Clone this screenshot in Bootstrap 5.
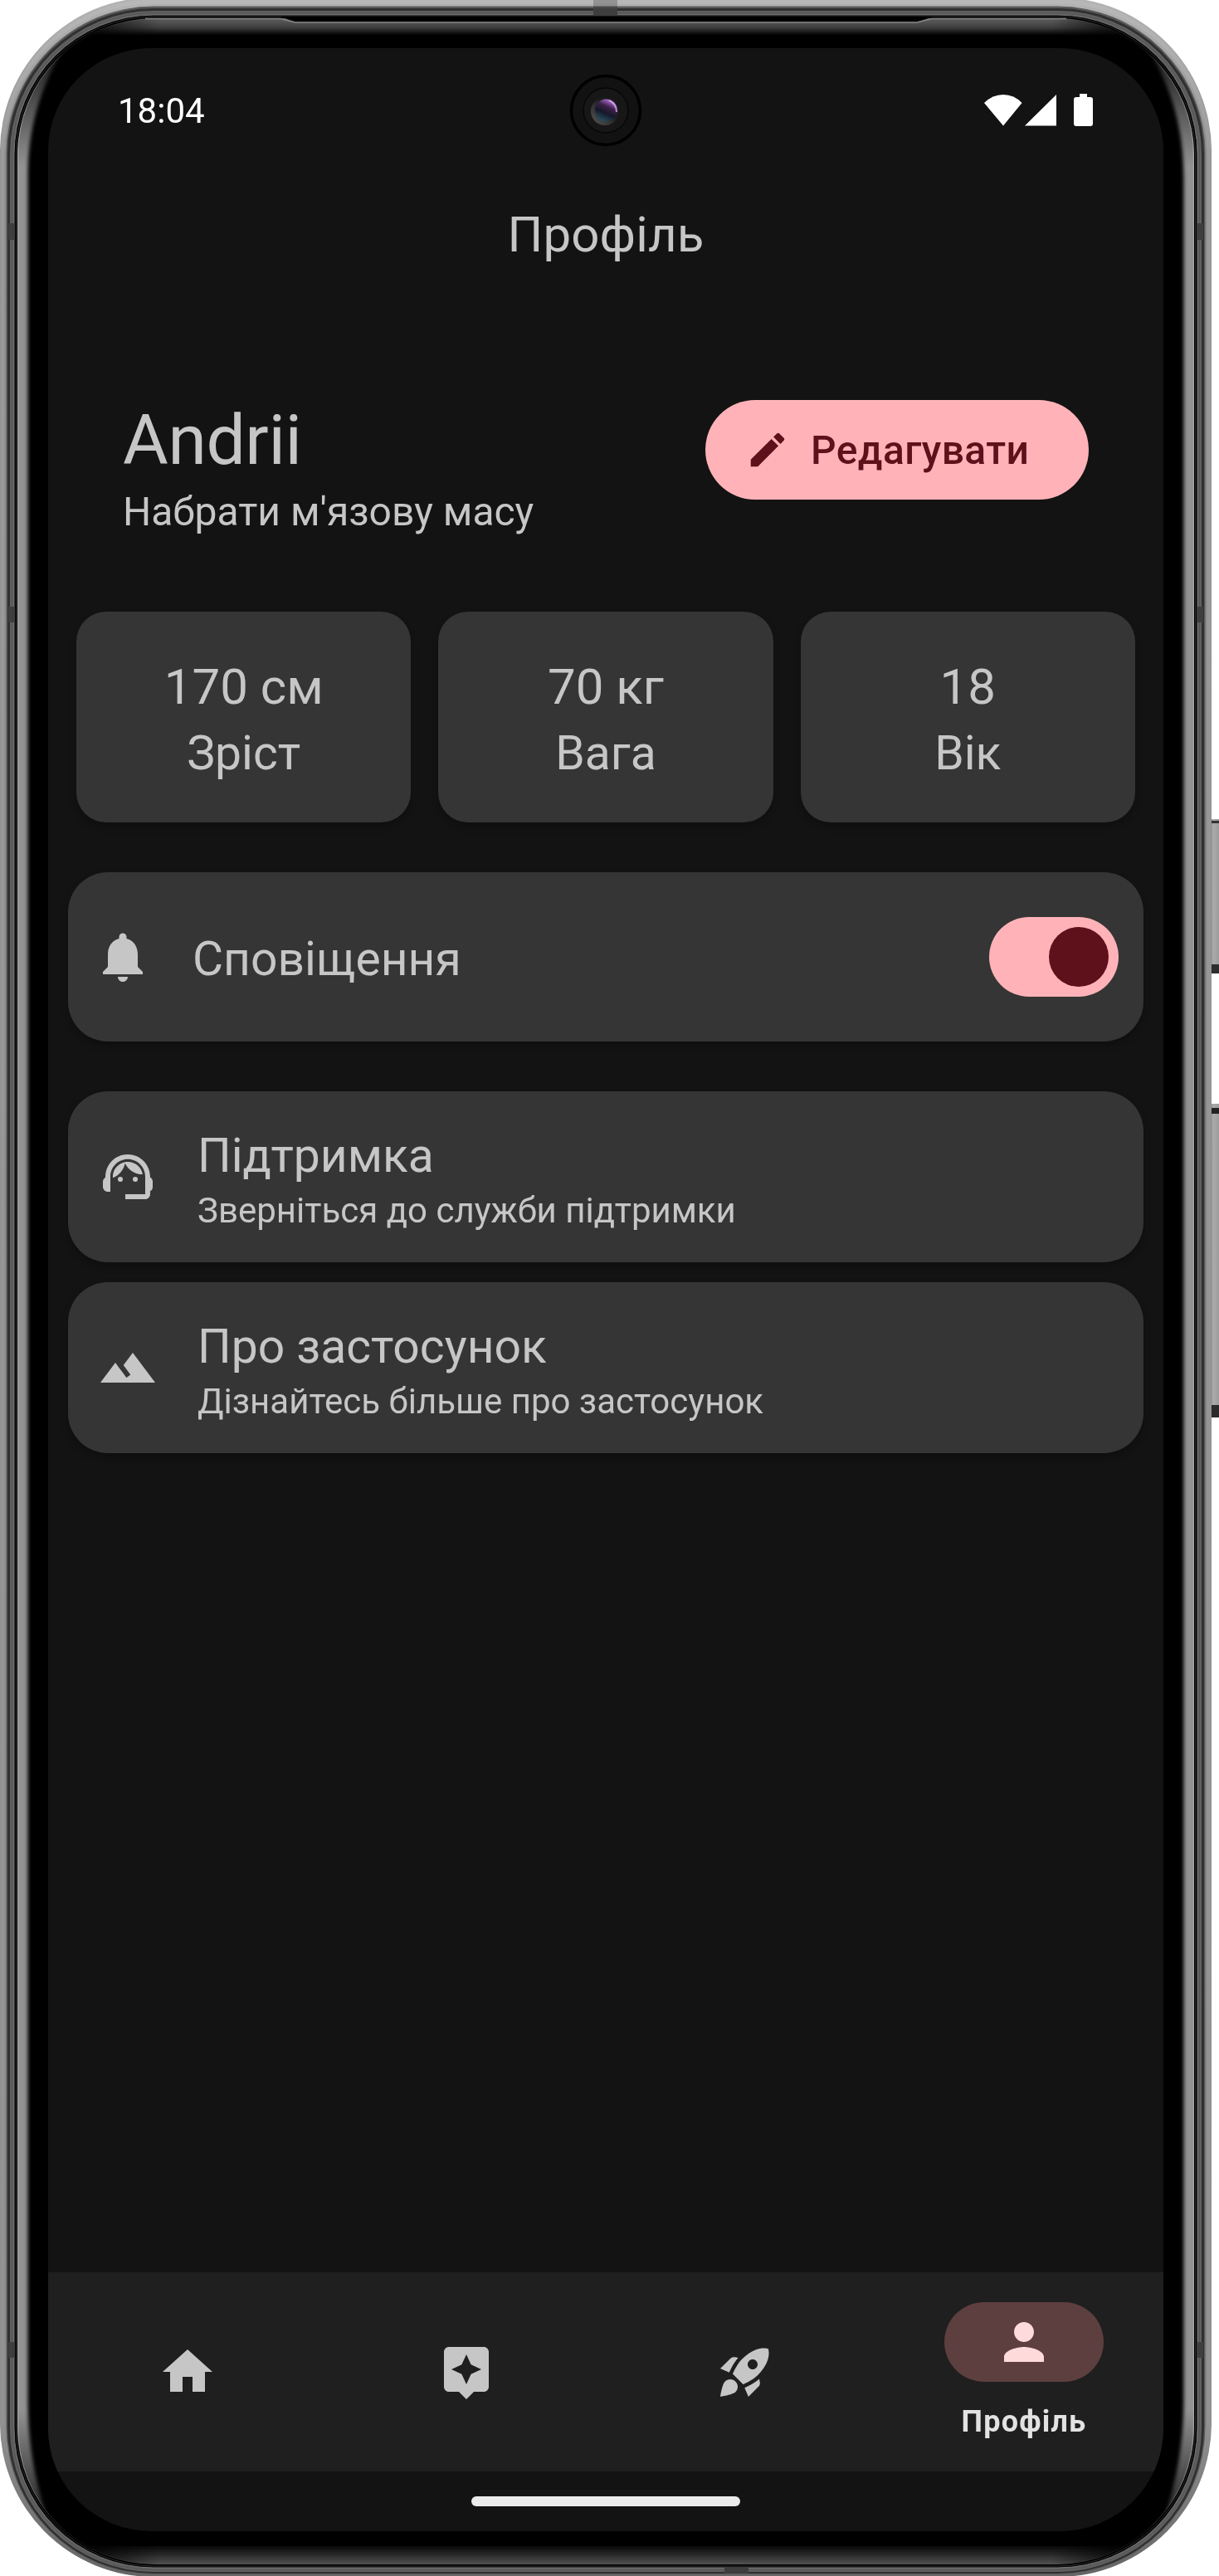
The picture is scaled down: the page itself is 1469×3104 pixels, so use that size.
<!DOCTYPE html>
<html lang="uk">
<head>
<meta charset="utf-8">
<meta name="viewport" content="width=device-width, initial-scale=1">
<title>Профіль</title>
<link rel="stylesheet" href="https://cdn.jsdelivr.net/npm/bootstrap@5.3.0/dist/css/bootstrap.min.css">
<style>
  body { background: #fff; font-family: Roboto, "Noto Sans", sans-serif; color: #c6c6c6; }
  .phone { width: 1469px; height: 3104px; padding: 58px 67px 54px 58px; }
  .phone-frame { top: 0; left: 0; }
  .app-screen { background: #131313; border-radius: 124px; height: 2992px; }
  .status-bar { height: 150px; padding: 0 84px 0 84px; color: #fff; }
  .clock { font-size: 42px; line-height: 48px; padding-top: 1px; }
  .camera { top: 89px; left: 686px; }
  .top-title { height: 150px; font-size: 60px; line-height: 150px; letter-spacing: .1px; }
  .profile-head { padding: 122px 90px 0 90px; height: 294px; }
  .user-name { font-size: 84px; line-height: 102px; letter-spacing: -.4px; }
  .user-goal { font-size: 48px; line-height: 70px; }
  .btn-edit { --bs-btn-bg: #ffb3b8; --bs-btn-color: #5e101b; --bs-btn-border-width: 0; --bs-btn-font-size: 48px; --bs-btn-line-height: 72px; --bs-btn-font-weight: 500; width: 462px; height: 120px; padding: 0 0 0 48px; gap: 25px; margin-top: 2px; }
  .edit-text { letter-spacing: .4px; padding-top: 2px; }
  .stat-grid { padding: 0 34px; gap: 33px; margin-top: 85px; }
  .tile { background: #353535; box-shadow: 0 5px 8px rgba(0,0,0,.25); }
  .stat-tile { height: 254px; border-radius: 36px; padding-top: 51px; }
  .stat-value { font-size: 60px; line-height: 80px; }
  .stat-label { font-size: 57px; line-height: 79px; }
  .row-tile { height: 206px; border-radius: 48px; margin: 0 24px; padding: 0 30px 0 36px; gap: 48px; }
  .row-tile.notify { height: 204px; margin-top: 60px; margin-bottom: 60px; padding-left: 30px; }
  .row-title { font-size: 57px; line-height: 78px; }
  .notify-title { padding-top: 5px; }
  .row-sub { font-size: 42px; line-height: 54px; }
  .row-texts { padding-top: 3px; }
  .ico { width: 72px; height: 72px; fill: currentColor; flex: none; }
  .toggle { width: 156px; height: 96px; border-radius: 48px; background: #ffb3b8; padding: 12px; }
  .toggle-knob { width: 72px; height: 72px; background: #5e101b; }
  .tabs { height: 240px; background: #1f1f1f; }
  .tabs .tab-item { width: 336px; padding: 0; border: 0; background: none; color: #c6c6c6; }
  .tabs .tab-item.active { color: #ffdadb; }
  .tab-pill { width: 192px; height: 96px; border-radius: 48px; background: #5d3f40; margin-bottom: 24px; }
  .tab-label { font-size: 36px; line-height: 48px; font-weight: 700; letter-spacing: 1.2px; color: #e2e2e2; }
  .gesture { height: 72px; }
  .gesture-bar { width: 324px; height: 12px; border-radius: 6px; background: #ebebeb; }
</style>
</head>
<body>
<div class="phone position-relative overflow-hidden">
  <svg class="phone-frame position-absolute" width="1469" height="3104" viewBox="0 0 1469 3104" fill="none" aria-hidden="true">
    <defs>
      <linearGradient id="rim" x1="0" y1="0" x2="0" y2="1">
        <stop offset="0" stop-color="#b4b4b4"/><stop offset=".06" stop-color="#8c8c8c"/><stop offset=".95" stop-color="#8c8c8c"/><stop offset="1" stop-color="#606060"/>
      </linearGradient>
      <linearGradient id="rimLight" x1="0" y1="0" x2="0" y2="1">
        <stop offset="0" stop-color="#b8b8b8"/><stop offset=".06" stop-color="#9a9a9a"/><stop offset=".94" stop-color="#929292"/><stop offset="1" stop-color="#666"/>
      </linearGradient>
      <linearGradient id="glassTop" x1="0" y1="22" x2="0" y2="42" gradientUnits="userSpaceOnUse">
        <stop offset="0" stop-color="#5e5e5e"/><stop offset=".5" stop-color="#444"/><stop offset="1" stop-color="#000"/>
      </linearGradient>
      <linearGradient id="glassBottom" x1="0" y1="3066" x2="0" y2="3090" gradientUnits="userSpaceOnUse">
        <stop offset="0" stop-color="#000"/><stop offset=".55" stop-color="#2c2c2c"/><stop offset="1" stop-color="#505050"/>
      </linearGradient>
      <linearGradient id="fadeV" x1="0" y1="50" x2="0" y2="3054" gradientUnits="userSpaceOnUse">
        <stop offset="0" stop-color="#fff" stop-opacity=".1"/><stop offset=".05" stop-color="#fff"/><stop offset=".95" stop-color="#fff"/><stop offset="1" stop-color="#fff" stop-opacity=".1"/>
      </linearGradient>
      <linearGradient id="fadeH" x1="90" y1="0" x2="1370" y2="0" gradientUnits="userSpaceOnUse">
        <stop offset="0" stop-color="#fff" stop-opacity=".1"/><stop offset=".08" stop-color="#fff"/><stop offset=".92" stop-color="#fff"/><stop offset="1" stop-color="#fff" stop-opacity=".1"/>
      </linearGradient>
      <mask id="mV" maskUnits="userSpaceOnUse" x="0" y="0" width="1469" height="3104"><rect width="1469" height="3104" fill="url(#fadeV)"/></mask>
      <mask id="mH" maskUnits="userSpaceOnUse" x="0" y="0" width="1469" height="3104"><rect width="1469" height="3104" fill="url(#fadeH)"/></mask>
      <filter id="soft" filterUnits="userSpaceOnUse" x="0" y="0" width="1469" height="3104"><feGaussianBlur stdDeviation="2.200"/></filter>
      <clipPath id="glass"><rect x="21" y="22" width="1418" height="3068" rx="165"/></clipPath>
      <linearGradient id="key" x1="0" y1="0" x2="1" y2="0"><stop offset="0" stop-color="#8a8a8a"/><stop offset=".3" stop-color="#ababab"/><stop offset="1" stop-color="#9c9c9c"/></linearGradient>
    </defs>
    <!-- side keys -->
    <rect x="1459" y="987" width="10" height="186" fill="url(#key)"/>
    <rect x="1459" y="989" width="10" height="3" fill="#333"/><rect x="1459" y="1162" width="10" height="11" fill="#2e2e2e"/>
    <rect x="1459" y="1330" width="10" height="378" fill="url(#key)"/>
    <rect x="1459" y="1335" width="10" height="7" fill="#222"/><rect x="1459" y="1693" width="10" height="15" fill="#2b2b2b"/>
    <!-- metal rim -->
    <rect x="0" y="-3" width="1460" height="3108" rx="185" fill="url(#rim)"/>
    <rect x="3" y="2" width="1454" height="3100" rx="182" stroke="url(#rimLight)" stroke-width="5"/>
    <rect x="7.500" y="7.500" width="1445" height="3094.500" rx="178" fill="#5a5a5a"/>
    <rect x="9" y="10" width="1442" height="3091" rx="176" fill="#303030"/>
    <rect x="12" y="13" width="1436" height="3086" rx="173" fill="#606060"/>
    <rect x="14.500" y="15.500" width="1431" height="3081" rx="171" stroke="#555" stroke-width="1"/>
    <rect x="17" y="18" width="1426" height="3076" rx="168" stroke="#747474" stroke-width="1" fill="#000"/>
    <rect x="19.500" y="20" width="1421" height="3072" rx="166" stroke="#2c2c2c" stroke-width="1" fill="#000"/>
    <g fill="#3e3e3e">
      <rect x="10" y="269" width="8" height="20"/><rect x="1442" y="269" width="8" height="20"/>
      <rect x="10" y="731" width="8" height="19"/><rect x="1442" y="731" width="8" height="19"/>
      <rect x="10" y="2822" width="8" height="19"/><rect x="1442" y="2822" width="8" height="19"/>
      <rect x="715" y="10" width="29" height="8"/><rect x="873" y="3094" width="29" height="7"/>
    </g>
    <rect x="715" y="0" width="29" height="10" fill="#000" opacity=".2"/>
    <!-- curved glass edge -->
    <g clip-path="url(#glass)">
      <rect x="21" y="22" width="1418" height="3068" fill="#000"/>
      <g mask="url(#mH)">
        <path d="M90 54Q130 41 175 41H1285Q1330 41 1370 54V10H90Z" fill="url(#glassTop)" filter="url(#soft)"/>
        <path d="M90 3048Q130 3066 180 3066H1280Q1330 3066 1370 3048V3100H90Z" fill="url(#glassBottom)" filter="url(#soft)"/>
      </g>
      <g mask="url(#mV)">
        <g fill="#929292" filter="url(#soft)">
          <path d="M6 56H78C48 105 33.500 155 33.500 215V2890C33.500 2950 44 3000 62 3048H6Z"/>
          <path d="M1454 56H1382C1412 105 1426.500 155 1426.500 215V2890C1426.500 2950 1416 3000 1398 3048H1454Z"/>
        </g>
      </g>
      <rect x="21.500" y="22.500" width="1417" height="3067" rx="164" stroke="#a8a8a8" stroke-width="1.300" mask="url(#mV)"/>
    </g>
    <!-- earpiece slot -->
    <path d="M338 20H1125L1105 26.500H356Z" fill="#000"/>
    <path d="M175 22.500H338L356 27H1105L1123 22.500H1285" stroke="#858585" stroke-width="1.500"/>
  </svg>

  <main class="app-screen position-relative d-flex flex-column overflow-hidden">
    <div class="status-bar d-flex align-items-center justify-content-between">
      <span class="clock">18:04</span>
      <svg width="132" height="40" viewBox="0 0 132 40" fill="#fff" aria-label="Wi-Fi, мережа, батарея">
        <path d="M0 11Q10 1 23 1T45.500 11L23 38.500Z"/><path d="M49 38.500L87 1V38.500Z"/>
        <path d="M115 0h9v4h4q3 0 3 3v29q0 3-3 3h-17q-3 0-3-3V7q0-3 3-3h4z"/>
      </svg>
    </div>
    <h1 class="top-title fw-normal text-center m-0">Профіль</h1>

    <section class="profile-head d-flex justify-content-between align-items-start">
      <div>
        <div class="user-name">Andrii</div>
        <div class="user-goal">Набрати м'язову масу</div>
      </div>
      <button type="button" class="btn btn-edit rounded-pill d-flex align-items-center">
        <svg width="54" height="54" viewBox="0 0 24 24" fill="currentColor"><path d="M3 17.250V21h3.750L17.810 9.940l-3.750-3.750L3 17.250zM20.710 7.040c.39-.39.39-1.020 0-1.410l-2.340-2.340c-.39-.39-1.020-.39-1.410 0l-1.830 1.830 3.750 3.750 1.830-1.830z"/></svg>
        <span class="edit-text">Редагувати</span>
      </button>
    </section>

    <section class="stat-grid d-flex text-center">
      <div class="tile stat-tile flex-fill w-100"><div class="stat-value">170 см</div><div class="stat-label">Зріст</div></div>
      <div class="tile stat-tile flex-fill w-100"><div class="stat-value">70 кг</div><div class="stat-label">Вага</div></div>
      <div class="tile stat-tile flex-fill w-100"><div class="stat-value">18</div><div class="stat-label">Вік</div></div>
    </section>

    <div class="tile row-tile notify d-flex align-items-center">
      <svg class="ico" viewBox="0 0 24 24"><path d="M12 22c1.100 0 2-.9 2-2h-4c0 1.100.89 2 2 2zm6-6v-5c0-3.070-1.640-5.640-4.500-6.320V4c0-.83-.67-1.500-1.500-1.500s-1.500.67-1.500 1.500v.68C7.630 5.360 6 7.920 6 11v5l-2 2v1h16v-1l-2-2z"/></svg>
      <div class="row-title notify-title">Сповіщення</div>
      <div class="toggle d-flex justify-content-end ms-auto" role="switch" aria-checked="true"><div class="toggle-knob rounded-circle"></div></div>
    </div>

    <div class="d-flex flex-column gap-4">
      <div class="tile row-tile d-flex align-items-center">
        <svg class="ico" viewBox="0 0 24 24"><path d="M21 12.220C21 6.730 16.740 3 12 3c-4.690 0-9 3.650-9 9.280-.6.34-1 .98-1 1.720v2c0 1.100.9 2 2 2h1v-6.100c0-3.870 3.130-7 7-7s7 3.130 7 7V19h-8v2h8c1.100 0 2-.9 2-2v-1.220c.59-.31 1-.92 1-1.640v-2.300c0-.7-.41-1.310-1-1.620z"/><circle cx="9" cy="13" r="1"/><circle cx="15" cy="13" r="1"/><path d="M18 11.030C17.520 8.180 15.040 6 12.050 6c-3.030 0-6.290 2.510-6.030 6.450 2.470-1.010 4.330-3.210 4.860-5.890 1.310 2.630 4 4.440 7.120 4.470z"/></svg>
        <div class="row-texts"><div class="row-title">Підтримка</div><div class="row-sub">Зверніться до служби підтримки</div></div>
      </div>
      <div class="tile row-tile d-flex align-items-center">
        <svg class="ico" viewBox="0 0 24 24"><path d="M14 6l-3.750 5 2.850 3.800-1.600 1.200C9.810 13.750 7 10 7 10l-6 8h22L14 6z"/></svg>
        <div class="row-texts"><div class="row-title">Про застосунок</div><div class="row-sub">Дізнайтесь більше про застосунок</div></div>
      </div>
    </div>

    <nav class="tabs d-flex mt-auto">
      <button class="tab-item d-flex align-items-center justify-content-center" aria-label="Головна"><svg class="ico" viewBox="0 0 24 24"><path d="M10 20v-6h4v6h5v-8h3L12 3 2 12h3v8z"/></svg></button>
      <button class="tab-item d-flex align-items-center justify-content-center" aria-label="Асистент"><svg class="ico" viewBox="0 0 24 24"><path d="M19 2H5c-1.110 0-2 .9-2 2v14c0 1.100.89 2 2 2h4l3 3 3-3h4c1.100 0 2-.9 2-2V4c0-1.100-.9-2-2-2zm-5.120 10.880L12 17l-1.880-4.120L6 11l4.120-1.880L12 5l1.880 4.120L18 11l-4.120 1.880z"/></svg></button>
      <button class="tab-item d-flex align-items-center justify-content-center" aria-label="Тренування"><svg class="ico" viewBox="0 0 24 24"><path d="M9.190 6.350c-2.040 2.290-3.440 5.580-3.570 5.890L2 10.690l4.050-4.050c.47-.47 1.150-.68 1.810-.55l1.330.26zM11.170 17s3.740-1.550 5.890-3.700c5.400-5.400 4.500-9.620 4.210-10.570-.95-.3-5.170-1.190-10.570 4.210C8.550 9.090 7 12.830 7 12.830L11.170 17zm6.480-2.190c-2.290 2.040-5.580 3.440-5.890 3.570L13.310 22l4.050-4.050c.47-.47.68-1.150.55-1.810l-.26-1.330zM9 18c0 .83-.34 1.580-.88 2.120C6.940 21.300 2 22 2 22s.7-4.940 1.880-6.120C4.420 15.340 5.170 15 6 15c1.660 0 3 1.340 3 3zm4-9c0-1.100.9-2 2-2s2 .9 2 2-.9 2-2 2-2-.9-2-2z"/></svg></button>
      <button class="tab-item active d-flex flex-column align-items-center justify-content-center">
        <span class="tab-pill d-flex align-items-center justify-content-center"><svg class="ico" viewBox="0 0 24 24"><path d="M12 12c2.210 0 4-1.790 4-4s-1.790-4-4-4-4 1.790-4 4 1.790 4 4 4zm0 2c-2.670 0-8 1.340-8 4v2h16v-2c0-2.660-5.330-4-8-4z"/></svg></span>
        <span class="tab-label">Профіль</span>
      </button>
    </nav>
    <div class="gesture d-flex align-items-center justify-content-center"><div class="gesture-bar"></div></div>
  </main>

  <svg class="camera position-absolute" width="88" height="88" viewBox="0 0 88 88" aria-hidden="true">
    <defs>
      <linearGradient id="lens" x1=".75" y1=".1" x2=".35" y2="1"><stop offset="0" stop-color="#a86bc8"/><stop offset=".3" stop-color="#3b2148"/><stop offset=".6" stop-color="#15182a"/><stop offset="1" stop-color="#27505f"/></linearGradient>
      <linearGradient id="ringShine" x1="0" y1="1" x2="1" y2="0"><stop offset="0" stop-color="#5a5a5a"/><stop offset=".6" stop-color="#1c1c1c"/><stop offset="1" stop-color="#181818"/></linearGradient>
    </defs>
    <circle cx="44" cy="44" r="41.500" fill="#121212" stroke="#000" stroke-width="3.500"/>
    <circle cx="44" cy="44" r="27" fill="#171717" stroke="#070707" stroke-width="1.500"/>
    <circle cx="43" cy="45" r="17" fill="url(#ringShine)"/>
    <circle cx="44.500" cy="44" r="13.500" fill="url(#lens)"/>
    <path d="M48 32Q57 36 57 46" fill="none" stroke="#d9a4ee" stroke-width="2" opacity=".8"/>
  </svg>
</div>
<script src="https://cdn.jsdelivr.net/npm/bootstrap@5.3.0/dist/js/bootstrap.bundle.min.js"></script>
</body>
</html>
